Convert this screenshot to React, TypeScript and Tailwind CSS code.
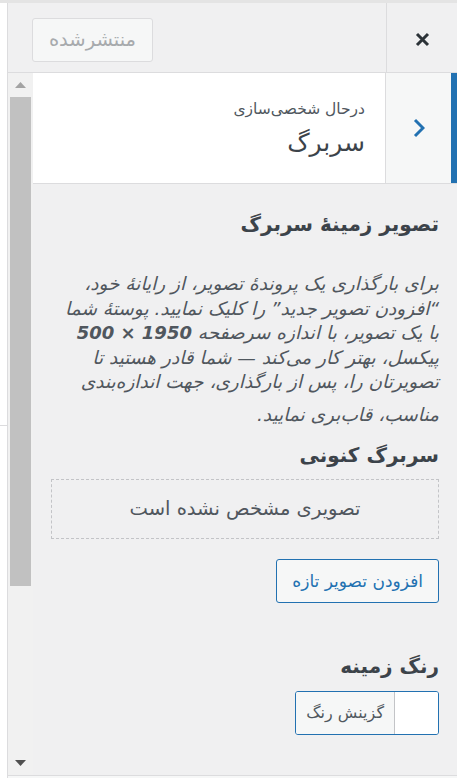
import React from 'react'

const font = "font-['DejaVu_Sans',sans-serif]"

function ScrollArrow({ up }: { up?: boolean }) {
  return (
    <svg width="11" height="6" viewBox="0 0 11 6" className={up ? 'text-[#a3a3a3]' : 'text-[#505050]'}>
      <polygon points={up ? '0,6 11,6 5.5,0' : '0,0 11,0 5.5,6'} fill="currentColor" />
    </svg>
  )
}

export default function App() {
  return (
    <div dir="rtl" className={`w-[457px] h-[778px] overflow-hidden bg-white flex flex-col ${font}`}>
      <div className="h-[3px] bg-[#e4e4e4]" />
      <div className="flex flex-1 min-h-0">
        {/* Customizer sidebar */}
        <div className="w-[450px] border-l border-[#dcdcde] bg-[#f0f0f1] flex flex-col">
          {/* Header */}
          <div className="h-[70px] flex border-b border-[#dcdcde]">
            <button className="w-[71px] border-l border-[#dcdcde] flex justify-center pt-[29px]">
              <svg width="15" height="15" viewBox="0 0 15 15">
                <path d="M2 2L13 13M13 2L2 13" stroke="#2c3338" strokeWidth="3" />
              </svg>
            </button>
            <div className="flex-1 flex justify-end items-start pt-[15px] pl-[24px]">
              <button
                disabled
                className="w-[121px] h-[44px] rounded-[3px] border border-[#dcdcde] bg-[#f6f7f7] text-[#a7aaad] text-[19.5px] leading-none"
              >
                منتشرشده
              </button>
            </div>
          </div>

          {/* Scrollable body */}
          <div className="flex flex-1 min-h-0 border-b border-[#dcdcde]">
            <div className="flex-1 min-w-0 overflow-hidden flex flex-col">
              {/* Section title */}
              <div className="h-[111px] shrink-0 flex border-b border-[#dcdcde]">
                <div className="w-[72px] border-r-[6px] border-r-[#2271b1] border-l border-l-[#dcdcde] bg-[#f6f7f7] flex items-center justify-center">
                  <svg width="12" height="20" viewBox="0 0 12 20">
                    <path d="M2 2L10 10L2 18" fill="none" stroke="#2271b1" strokeWidth="3" />
                  </svg>
                </div>
                <div className="flex-1 bg-white pr-[20px] flex flex-col justify-center">
                  <div className="text-[15.5px] text-[#50575e] leading-[20px]">درحال شخصی‌سازی</div>
                  <div className="text-[25px] text-[#3c434a] leading-[28px] mt-[10px]">سربرگ</div>
                </div>
              </div>

              {/* Controls */}
              <div className="px-[18px] pt-[28px] text-[#50575e]">
                <h3 className="text-[20px] font-bold leading-[24px] text-[#3c434a]">تصویر زمینهٔ سربرگ</h3>
                <p className="mt-[36px] text-[18.5px] italic leading-[24.5px]">
                  برای بارگذاری یک پروندهٔ تصویر، از رایانهٔ خود،
                  <br />
                  “افزودن تصویر جدید” را کلیک نمایید. پوستهٔ شما
                  <br />
                  با یک تصویر، با اندازه سرصفحه <strong className="text-[18px]">1950 × 500</strong>
                  <br />
                  پیکسل، بهتر کار می‌کند — شما قادر هستید تا
                  <br />
                  تصویرتان را، پس از بارگذاری، جهت اندازه‌بندی
                  <span className="block mt-[8px]">مناسب، قاب‌بری نمایید.</span>
                </p>

                <h3 className="mt-[16px] text-[20px] font-bold leading-[24px] text-[#3c434a]">سربرگ کنونی</h3>
                <div className="mt-[12px] h-[60px] border border-dashed border-[#c3c4c7] flex items-center justify-center text-[19.5px]">
                  تصویری مشخص نشده است
                </div>
                <div className="mt-[20px] flex">
                  <button className="h-[44px] px-[15px] rounded-[3px] border border-[#2271b1] bg-[#f6f7f7] text-[#2271b1] text-[17px] leading-none">
                    افزودن تصویر تازه
                  </button>
                </div>

                <h3 className="mt-[51px] text-[20px] font-bold leading-[24px] text-[#3c434a]">رنگ زمینه</h3>
                <div className="mt-[13px] flex">
                  <button className="h-[44px] flex rounded-[3px] border border-[#2271b1] overflow-hidden">
                    <span className="w-[44px] h-full bg-white border-l border-[#c3c4c7]" />
                    <span className="h-full px-[10px] bg-[#f6f7f7] text-[16px] text-[#50575e] flex items-center">گزینش رنگ</span>
                  </button>
                </div>
              </div>
            </div>

            {/* Scrollbar */}
            <div className="w-[25px] flex flex-col items-center bg-[#f1f1f1]">
              <div className="h-[24px] flex items-center">
                <ScrollArrow up />
              </div>
              <div className="w-[21px] h-[489px] bg-[#c1c1c1]" />
              <div className="flex-1" />
              <div className="h-[24px] flex items-center">
                <ScrollArrow />
              </div>
            </div>
          </div>
          <div className="h-[2px] bg-[#f6f7f7]" />
        </div>

        {/* Preview edge */}
        <div className="flex-1 bg-white flex flex-col">
          <div className="h-[422px]" />
          <div className="h-px bg-[#dcdcde]" />
        </div>
      </div>
    </div>
  )
}
